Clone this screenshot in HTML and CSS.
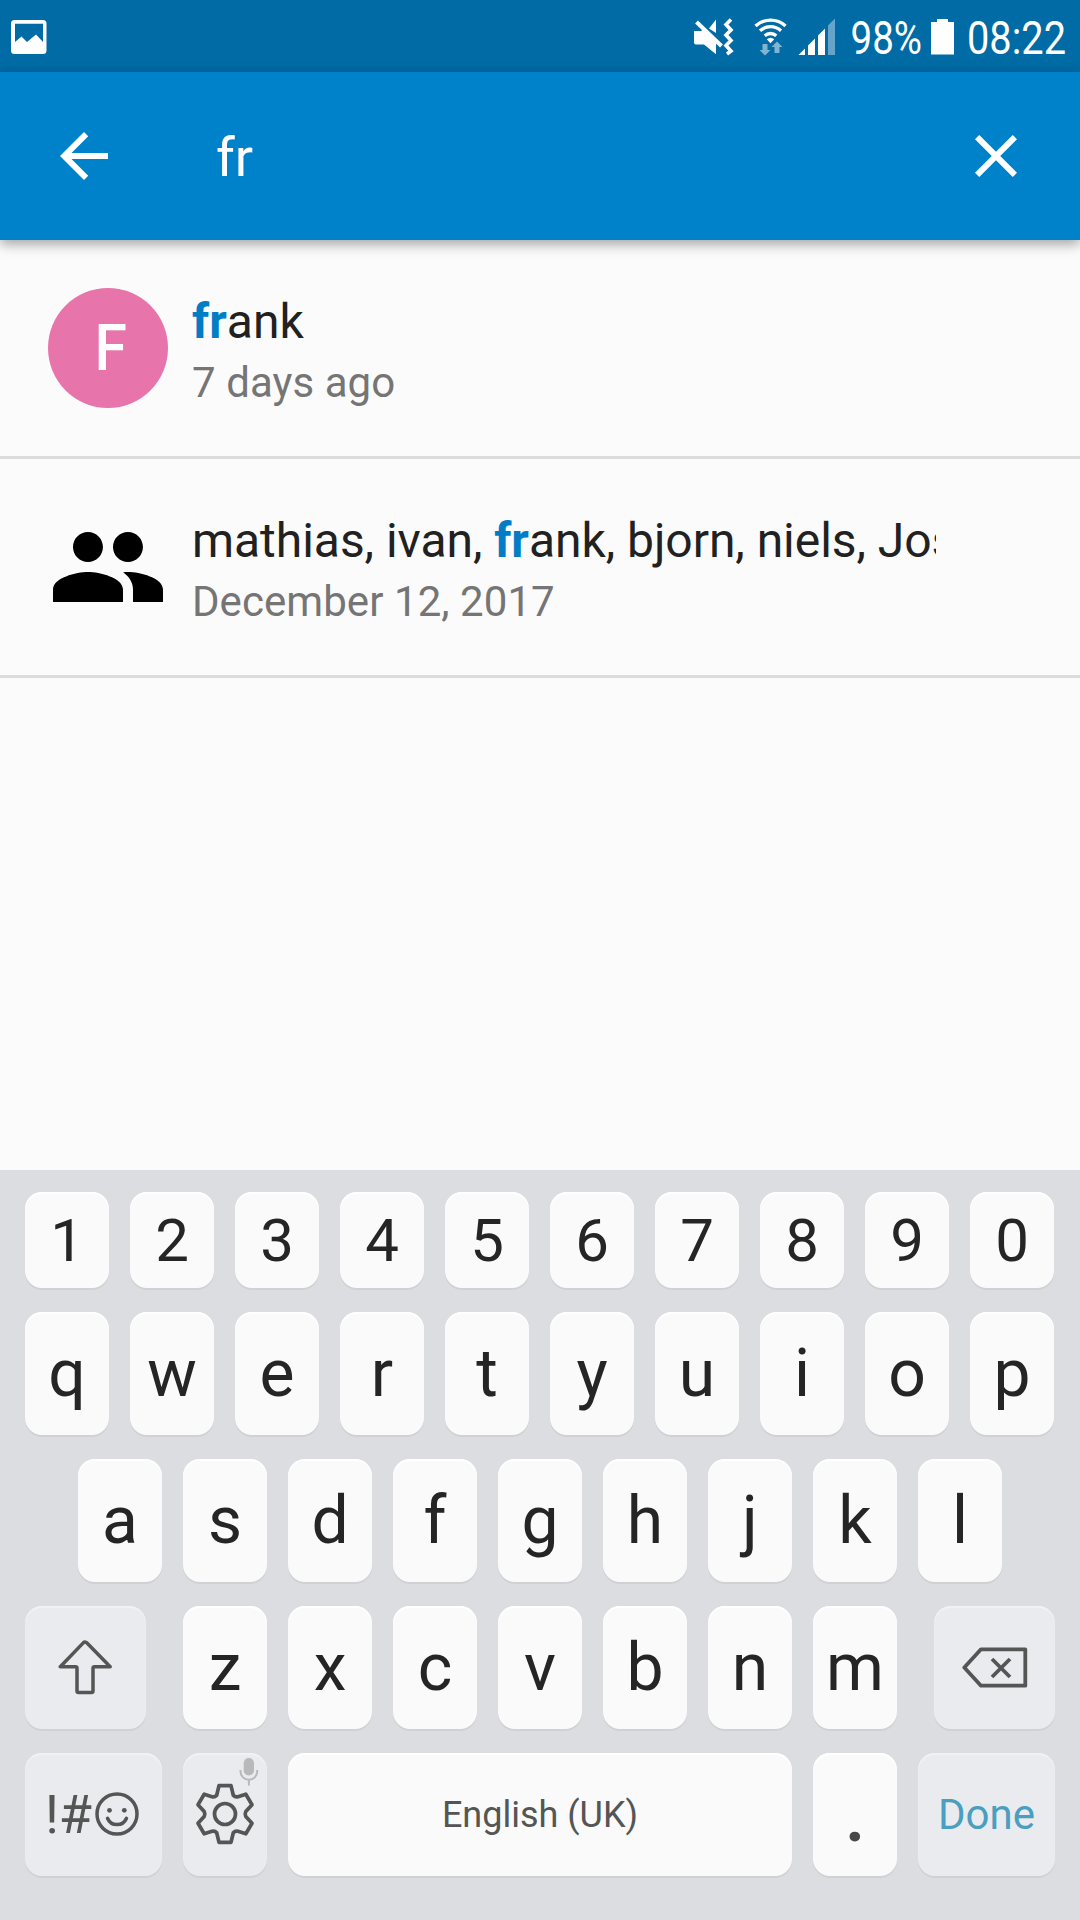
FILE: index.html
```html
<!DOCTYPE html>
<html lang="en">
<head>
<meta charset="utf-8">
<title>Search conversations</title>
<link rel="stylesheet" href="styles.css">
</head>
<body>
<div class="screen">
  <div class="status-bar">
    <svg class="status-picture" width="36" height="34" viewBox="0 0 36 34"><path fill="#fff" fill-rule="evenodd" d="M3.500 0H32a3.500 3.500 0 0 1 3.500 3.500V30.500a3.500 3.500 0 0 1-3.500 3.500H3.500A3.500 3.500 0 0 1 0 30.500V3.500A3.500 3.500 0 0 1 3.500 0ZM4 3.700V22l6.500-5.500 5.500 5.500 9-7.500 7 7.500V3.700Z"/></svg>
    <div class="status-right">
      <svg width="380" height="50" viewBox="692 16 380 50" class="status-icons">
        <g fill="#fff">
          <path d="M694 31h7l3-2 12 11v14.300l-12-9.800h-8a2 2 0 0 1-2-2Z"/>
          <path d="M709 28.500l7-9v13.500Z"/>
          <path d="M696.500 22l25 24" stroke="#fff" stroke-width="4"/>
          <path d="M731 20l-5 5 5 5.500-5 5 5 5.500-5 5 5 5.500-4 3" transform="translate(0 -.5)" fill="none" stroke="#fff" stroke-width="3.600"/>
          <g fill="none" stroke="#fff" stroke-width="3.300">
            <path d="M755.500 26a22 22 0 0 1 30 0"/>
            <path d="M760 30.800a15.500 15.500 0 0 1 21 0"/>
            <path d="M764.700 35.700a8.700 8.700 0 0 1 11.600 0"/>
          </g>
          <path d="M766.800 39.300q3.700-3 7.400 0l-3.700 4Z"/>
          <g fill="#80b5d1">
            <path d="M762.500 44h5v6h3l-5.500 5.500-5.500-5.500h3Z"/>
            <path d="M774.500 53h5v-6h3l-5.500-5.500-5.500 5.500h3Z"/>
          </g>
          <path d="M798.500 55l6.500-6.500V55ZM808 45.500l7-7V55h-7ZM818 35.500l7-7V55h-7Z"/>
          <path fill="#66a5c9" d="M828 25.500l7-7V55h-7Z"/>
          <path d="M937 19h11v3h6v32.500h-23V22h6Z"/>
        </g>
        <text class="status-text" x="850.500" y="54" textLength="71.500" lengthAdjust="spacingAndGlyphs">98%</text>
        <text class="status-text" x="967" y="54" textLength="99" lengthAdjust="spacingAndGlyphs">08:22</text>
      </svg>
    </div>
  </div>

  <header class="toolbar">
    <svg width="72" height="72" viewBox="0 0 24 24" fill="#fff"><path d="M20 11H7.830l5.590-5.590L12 4l-8 8 8 8 1.410-1.410L7.830 13H20v-2z"/></svg>
    <div class="query">fr</div>
    <svg width="72" height="72" viewBox="0 0 24 24" fill="#fff"><path d="M19 6.410L17.590 5 12 10.590 6.410 5 5 6.410 10.590 12 5 17.590 6.410 19 12 13.410 17.590 19 19 17.590 13.410 12z"/></svg>
  </header>

  <main class="results">
    <div class="result">
      <div class="avatar"><span>F</span></div>
      <div class="info">
        <div class="name"><b>fr</b>ank</div>
        <div class="date">7 days ago</div>
      </div>
    </div>
    <div class="result">
      <svg class="group" width="120" height="120" viewBox="0 0 24 24"><path d="M16 11c1.660 0 2.990-1.340 2.990-3S17.660 5 16 5c-1.660 0-3 1.340-3 3s1.340 3 3 3zm-8 0c1.660 0 2.990-1.340 2.990-3S9.660 5 8 5C6.340 5 5 6.340 5 8s1.340 3 3 3zm0 2c-2.330 0-7 1.170-7 3.500V19h14v-2.500c0-2.330-4.670-3.500-7-3.500zm8 0c-.29 0-.62.02-.97.05 1.160.84 1.970 1.970 1.970 3.450V19h6v-2.500c0-2.330-4.670-3.500-7-3.500z"/></svg>
      <div class="info">
        <div class="name long">mathias, ivan, <b>fr</b>ank, bjorn, niels, Jos</div>
        <div class="date">December 12, 2017</div>
      </div>
    </div>
  </main>

  <div class="keyboard">
    <div class="row full digits"><div class="key">1</div><div class="key">2</div><div class="key">3</div><div class="key">4</div><div class="key">5</div><div class="key">6</div><div class="key">7</div><div class="key">8</div><div class="key">9</div><div class="key">0</div></div>
    <div class="row full"><div class="key">q</div><div class="key">w</div><div class="key">e</div><div class="key">r</div><div class="key">t</div><div class="key">y</div><div class="key">u</div><div class="key">i</div><div class="key">o</div><div class="key">p</div></div>
    <div class="row"><div class="key">a</div><div class="key">s</div><div class="key">d</div><div class="key">f</div><div class="key">g</div><div class="key">h</div><div class="key">j</div><div class="key">k</div><div class="key">l</div></div>
    <div class="row">
      <div class="key fn shift"><svg width="54" height="56" viewBox="0 0 54 56" fill="none" stroke="#555" stroke-width="3.500" stroke-linejoin="round"><path d="M27.500 3.200a2 2 0 0 0-2 .4L2.300 27.700h15.200a1.500 1.500 0 0 1 1.500 1.500V52a1.500 1.500 0 0 0 1.500 1.500h13a1.500 1.500 0 0 0 1.500-1.500V29.200a1.500 1.500 0 0 1 1.500-1.500H52.200L28.500 3.600a2 2 0 0 0-1-.4Z"/></svg></div>
      <div class="key">z</div><div class="key">x</div><div class="key">c</div><div class="key">v</div><div class="key">b</div><div class="key">n</div><div class="key">m</div>
      <div class="key fn delete"><svg width="66" height="41" viewBox="0 0 66 41" fill="none" stroke="#555" stroke-width="3.800" stroke-linejoin="round"><path d="M19 2.300H63.300V38.700H19L2.300 20.500Z"/><path d="M30 12L48 30M48 12L30 30"/></svg></div>
    </div>
    <div class="row">
      <div class="key fn symbols"><span>!#</span><svg width="44" height="44" viewBox="0 0 44 44"><g fill="none" stroke="#555" stroke-width="3.500"><circle cx="22" cy="22" r="20"/><path d="M12.500 26.300a10.300 10.300 0 0 0 19 0" stroke-linecap="round"/></g><circle cx="14.500" cy="18.300" r="2.400" fill="#555"/><circle cx="29.300" cy="18.300" r="2.400" fill="#555"/></svg></div>
      <div class="key fn settings">
        <svg width="60" height="62" viewBox="-30 -31 60 62" fill="none" stroke="#555" stroke-width="3.700" stroke-linejoin="round"><circle r="10.500"/><path d="M-6-28.400H6L8.300-18.800Q10.200-16.500 13-17.200L20.800-19.800 27-9.300 20.800-2.500Q19.500 0 20.800 2.500L27 9.300 20.800 19.800 13 17.200Q10.200 16.500 8.300 18.800L6 28.400H-6L-8.300 18.800Q-10.200 16.500-13 17.200L-20.800 19.800-27 9.300-20.800 2.500Q-19.500 0-20.800-2.500L-27-9.300-20.800-19.800-13-17.200Q-10.200-16.500-8.300-18.800Z"/></svg>
        <svg class="mic" width="20" height="28" viewBox="0 0 20 28"><rect x="4.700" y="0" width="10.300" height="17.500" rx="5.100" fill="#b8b9bb"/><path d="M1.500 12v1.500a8.300 8.300 0 0 0 16.700 0V12M9.900 21.500V27.500" fill="none" stroke="#b8b9bb" stroke-width="2"/></svg>
      </div>
      <div class="key space">English (UK)</div>
      <div class="key period">.</div>
      <div class="key fn done">Done</div>
    </div>
  </div>
</div>
</body>
</html>
```
FILE: styles.css
```css
* { box-sizing: border-box; }

body {
  margin: 0;
  font-family: Roboto, "Noto Sans", sans-serif;
  background: #fbfbfb;
}

svg { display: block; flex: none; }

.screen {
  width: 1080px;
  height: 1920px;
  display: flex;
  flex-direction: column;
  overflow: hidden;
}

.status-bar {
  height: 72px;
  flex: none;
  display: flex;
  justify-content: space-between;
  padding: 20px 0 0 11px;
  background: #006ba4;
}

.status-right { margin-top: -4px; padding-right: 8px; }
.status-text { font-size: 46px; fill: #fff; }

.toolbar {
  height: 168px;
  flex: none;
  display: flex;
  align-items: center;
  padding: 0 48px;
  background: #0082ca;
  box-shadow: 0 4px 12px rgba(0, 0, 0, .36);
  z-index: 1;
}

.query {
  flex: 1;
  padding: 3px 0 0 96px;
  font-size: 54px;
  line-height: 64px;
  color: #fff;
}

.results { flex: 1; }

.result {
  height: 219px;
  display: flex;
  align-items: flex-start;
  gap: 24px;
  padding: 48px 48px 0;
  border-bottom: 3px solid #dcdcdc;
}

.avatar {
  width: 120px;
  height: 120px;
  flex: none;
  border-radius: 50%;
  background: #e874ac;
  color: #fff;
  font-size: 64px;
  font-weight: 500;
  line-height: 121px;
  text-align: center;
  padding-left: 5px;
}

.avatar span {
  display: inline-block;
  transform: scaleX(.92);
}

.info {
  width: 744px;
  padding-top: 6px;
}

.name {
  overflow: hidden;
  white-space: nowrap;
  font-size: 48px;
  line-height: 56px;
  color: #212121;
}

.long { letter-spacing: -.04px; }

.name b { color: #007dc5; }

.date {
  margin-top: 8px;
  font-size: 42px;
  line-height: 49px;
  letter-spacing: .06px;
  color: #757575;
}

.keyboard {
  height: 750px;
  flex: none;
  display: flex;
  flex-direction: column;
  gap: 24px;
  padding: 22px 25px 0;
  background: #dcdde1;
}

.row {
  height: 123px;
  display: flex;
  justify-content: center;
  gap: 21px;
}

.full { justify-content: flex-start; }
.digits { height: 96px; }

.key {
  width: 84px;
  flex: none;
  display: flex;
  align-items: center;
  justify-content: center;
  border-radius: 17px;
  background: #fafafa;
  box-shadow: 0 2px 0 #d0d1d5, inset 0 2px 1px #fff;
  color: #252525;
  font-size: 66px;
  line-height: 78px;
  padding-top: 1px;
}

.digits .key { font-size: 60px; }

.fn {
  background: #e9ebef;
  box-shadow: 0 2px 0 #d0d1d5, inset 0 2px 1px #f1f2f4;
  color: #555;
  padding-top: 0;
}

.shift { width: 121px; margin-right: 16px; padding: 0 1px 2px 0; }
.delete { width: 121px; margin-left: 16px; padding: 0 0 1px 1px; }

.symbols { width: 137px; gap: 3px; font-size: 54px; padding-right: 3px; }
.symbols svg { margin-top: -1px; }

.settings { position: relative; padding-bottom: 1px; }
.mic { position: absolute; top: 5px; right: 8px; }

.space { width: 504px; font-size: 36px; color: #555; }
.period { color: #484848; font-weight: 700; padding-top: 9px; }
.done { width: 137px; font-size: 42px; color: #4a9fc0; }
```
